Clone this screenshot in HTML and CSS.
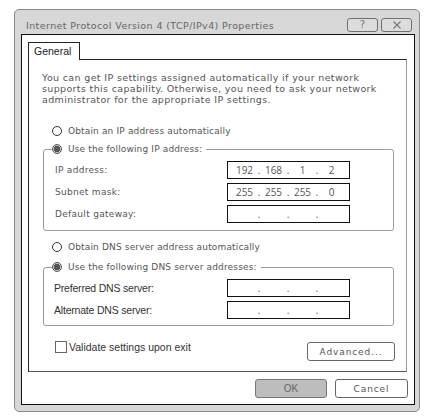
FILE: index.html
```html
<!DOCTYPE html>
<html>
<head>
<meta charset="utf-8">
<link rel="stylesheet" href="styles.css">
</head>
<body>
<div class="window">
  <div class="titlebar">
    <span class="title">Internet Protocol Version 4 (TCP/IPv4) Properties</span>
    <div class="caption-btns">
      <span class="cbtn">?</span>
      <span class="cbtn">
        <svg width="10" height="8" viewBox="0 0 10 8"><path d="M1.5 0.5 L8.5 7.5 M8.5 0.5 L1.5 7.5" stroke="#777" stroke-width="1.2" fill="none"/></svg>
      </span>
    </div>
  </div>
  <div class="client">
    <div class="tabs"><div class="tab">General</div></div>
    <div class="panel">
      <p class="intro">You can get IP settings assigned automatically if your network<br>supports this capability. Otherwise, you need to ask your network<br>administrator for the appropriate IP settings.</p>

      <div class="radio-row first"><span class="radio"></span><span>Obtain an IP address automatically</span></div>

      <fieldset class="group g1">
        <legend class="radio-row"><span class="radio checked"></span><span>Use the following IP address:</span></legend>
        <div class="fields">
          <span class="lbl">IP address:</span>
          <div class="ipbox"><span class="oct">192</span><span class="dot">.</span><span class="oct">168</span><span class="dot">.</span><span class="oct">1</span><span class="dot">.</span><span class="oct">2</span></div>
          <span class="lbl">Subnet mask:</span>
          <div class="ipbox"><span class="oct">255</span><span class="dot">.</span><span class="oct">255</span><span class="dot">.</span><span class="oct">255</span><span class="dot">.</span><span class="oct">0</span></div>
          <span class="lbl">Default gateway:</span>
          <div class="ipbox"><span class="oct"></span><span class="dot">.</span><span class="oct"></span><span class="dot">.</span><span class="oct"></span><span class="dot">.</span><span class="oct"></span></div>
        </div>
      </fieldset>

      <div class="radio-row second"><span class="radio"></span><span>Obtain DNS server address automatically</span></div>

      <fieldset class="group g2">
        <legend class="radio-row"><span class="radio checked"></span><span>Use the following DNS server addresses:</span></legend>
        <div class="fields">
          <span class="lbl alt">Preferred DNS server:</span>
          <div class="ipbox"><span class="oct"></span><span class="dot">.</span><span class="oct"></span><span class="dot">.</span><span class="oct"></span><span class="dot">.</span><span class="oct"></span></div>
          <span class="lbl alt">Alternate DNS server:</span>
          <div class="ipbox"><span class="oct"></span><span class="dot">.</span><span class="oct"></span><span class="dot">.</span><span class="oct"></span><span class="dot">.</span><span class="oct"></span></div>
        </div>
      </fieldset>

      <div class="bottom-row">
        <div class="check"><span class="box"></span><span class="check-label">Validate settings upon exit</span></div>
        <button class="btn adv">Advanced...</button>
      </div>
    </div>
    <div class="footer">
      <button class="btn ok">OK</button>
      <button class="btn cancel">Cancel</button>
    </div>
  </div>
</div>
</body>
</html>
```

FILE: styles.css
```css
* { box-sizing: border-box; }
html, body { margin: 0; padding: 0; background: #fff; }
body {
  font-family: "DejaVu Sans", Verdana, sans-serif;
  font-size: 9px;
  letter-spacing: 0.3px;
  color: #555;
}
.window {
  margin: 9px 0 0 14px;
  width: 406px;
  background: #d7d7d7;
  border: 1px solid #8a8a8a;
  border-radius: 5px;
  padding: 0 4px 6px 6px;
}
.titlebar {
  height: 24px;
  padding-top: 6px;
  display: flex;
  align-items: center;
  justify-content: space-between;
}
.title {
  padding-left: 5px;
  color: #666;
  font-size: 9.5px;
  letter-spacing: 0.4px;
}
.caption-btns {
  display: flex;
  gap: 3px;
  margin-right: 3px;
}
.cbtn {
  width: 31px;
  height: 14px;
  border: 1px solid #707070;
  border-radius: 3px;
  background: #dcdcdc;
  display: flex;
  align-items: center;
  justify-content: center;
  color: #777;
  font-size: 10px;
  line-height: 1;
}
.client {
  background: #fff;
  border: 1px solid #111;
}
.tabs {
  padding: 7px 0 0 6px;
  display: flex;
}
.tab {
  position: relative;
  z-index: 1;
  width: 52px;
  height: 18px;
  margin-bottom: -1px;
  border: 1px solid #222;
  border-bottom: none;
  background: #fff;
  font-family: "Liberation Sans", Arial, sans-serif;
  font-size: 10.5px;
  letter-spacing: 0;
  color: #222;
  padding: 2px 0 0 5px;
}
.panel {
  margin: 0 7px 0 6px;
  border-top: 1px solid #222;
  border-left: 1px solid #222;
  border-right: 1px solid #999;
  border-bottom: 1px solid #555;
  padding: 12px 12px 10px 13px;
}
.intro {
  margin: 0;
  line-height: 11px;
  font-size: 9.5px;
  letter-spacing: 0.35px;
}
.radio-row {
  display: flex;
  align-items: center;
  gap: 6px;
  height: 12px;
  margin-left: 10px;
  letter-spacing: 0.15px;
}
.radio-row.first { margin-top: 20px; }
.radio-row.second { margin-top: 10px; }
.radio {
  width: 10px;
  height: 10px;
  border: 1.5px solid #333;
  border-radius: 50%;
  background: #fff;
  flex: none;
}
.radio.checked {
  border: 1px solid #555;
  background: radial-gradient(circle, #555 0 3px, #ccc 3.5px 100%);
}
.group {
  margin: 6px 0 0 1px;
  width: 351px;
  border: 1px solid #9a9a9a;
  border-radius: 3px;
  padding: 6px 0 7px 8px;
  min-inline-size: 0;
}
.g2 { margin-top: 8px; padding-bottom: 6px; }
.group legend.radio-row {
  margin-left: 0;
  padding: 0 4px 0 0;
}
.fields {
  display: grid;
  grid-template-columns: 172px 123px;
  grid-auto-rows: 18px;
  row-gap: 4px;
  margin-left: 3px;
  align-items: center;
}
.lbl { line-height: 12px; }
.lbl.alt {
  font-family: "Liberation Sans", Arial, sans-serif;
  font-size: 10.5px;
  letter-spacing: -0.2px;
  color: #333;
  margin-left: -1px;
}
.ipbox {
  height: 18px;
  border: 1px solid #111;
  display: flex;
  align-items: center;
  padding-left: 5px;
  font-family: "Open Sans", "Noto Sans", sans-serif;
  font-size: 10px;
  letter-spacing: 0;
  color: #555;
}
.oct { width: 23px; text-align: center; }
.dot { width: 6px; text-align: center; }
.bottom-row {
  margin-top: 15px;
  display: flex;
  justify-content: space-between;
  align-items: flex-start;
  height: 20px;
  padding-left: 13px;
}
.check {
  display: flex;
  align-items: center;
  gap: 2px;
  height: 12px;
}
.box {
  width: 12px;
  height: 12px;
  border: 1px solid #666;
  background: #fff;
}
.check-label {
  font-family: "Liberation Sans", Arial, sans-serif;
  font-size: 10.5px;
  letter-spacing: 0;
  color: #333;
}
.btn {
  font-family: "DejaVu Sans", Verdana, sans-serif;
  font-size: 9px;
  letter-spacing: 0.9px;
  color: #555;
  background: #fff;
  border: 1px solid #666;
  border-radius: 3px;
  height: 19px;
  padding: 0;
  margin: 0;
}
.adv {
  width: 88px;
  margin-top: 1px;
  margin-right: -1px;
}
.footer {
  display: flex;
  justify-content: flex-end;
  gap: 8px;
  padding: 7px 6px 6px 0;
}
.ok {
  width: 72px;
  background: #bdbdbd;
  border-color: #777;
  font-family: "Liberation Sans", Arial, sans-serif;
  font-size: 10px;
  letter-spacing: 0;
  color: #666;
}
.cancel { width: 73px; }
```
